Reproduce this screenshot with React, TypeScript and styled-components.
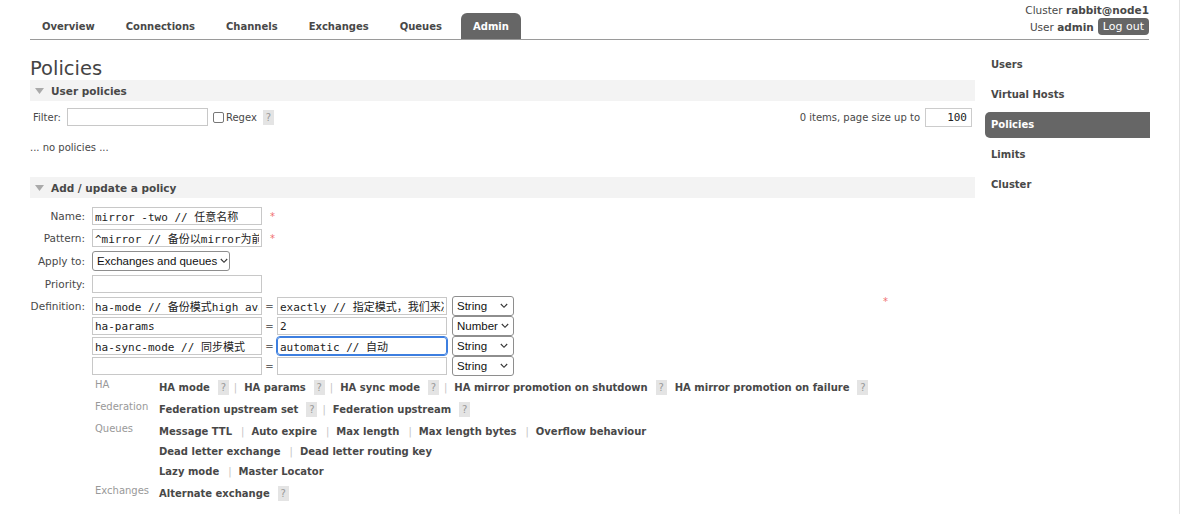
import React from 'react';
import styled, { createGlobalStyle } from 'styled-components';

const GlobalStyle = createGlobalStyle`
  html, body {
    margin: 0;
    padding: 0;
    background: #fff;
  }
  body {
    font-family: "DejaVu Sans", Verdana, sans-serif;
    font-size: 10px;
    color: #484848;
  }
`;

const MONO = '"DejaVu Sans Mono", "Noto Sans CJK SC", monospace';

const Page = styled.div`
  width: 1180px;
  height: 514px;
  box-sizing: border-box;
  border-right: 1px solid #e2e2e2;
  overflow: hidden;
`;

const Header = styled.div`
  margin: 0 30px 0 30px;
  height: 40px;
  box-sizing: border-box;
  border-bottom: 1px solid #9a9a9a;
  display: flex;
  justify-content: space-between;
  align-items: flex-end;
`;

const Nav = styled.div`
  display: flex;
  gap: 7px;
`;

const Tab = styled.div<{ active?: boolean }>`
  height: 26px;
  line-height: 27px;
  padding: 0 12px;
  font-weight: bold;
  font-size: 10px;
  color: ${(p) => (p.active ? '#fff' : '#484848')};
  background: ${(p) => (p.active ? '#666' : 'transparent')};
  border-radius: 6px 6px 0 0;
`;

const UserInfo = styled.div`
  display: flex;
  flex-direction: column;
  align-items: flex-end;
  padding-bottom: 4px;
  font-size: 10.5px;
  gap: 2px;
`;

const UserRow = styled.div`
  display: flex;
  align-items: center;
  gap: 4px;
`;

const LogOut = styled.span`
  background: #666;
  color: #fff;
  border-radius: 4px;
  padding: 0 5px;
  height: 17px;
  line-height: 17px;
  font-size: 11px;
`;

const Body = styled.div`
  display: flex;
  padding-left: 30px;
  gap: 10px;
`;

const Main = styled.div`
  width: 945px;
`;

const Title = styled.h1`
  margin: 18px 0 0 0;
  font-size: 19.5px;
  line-height: 22px;
  font-weight: normal;
  color: #444;
`;

const SectionHeader = styled.div<{ top?: number }>`
  margin-top: ${(p) => p.top ?? 0}px;
  height: 21px;
  background: #f3f3f3;
  display: flex;
  align-items: center;
  gap: 7px;
  padding-left: 5px;
  font-weight: bold;
  font-size: 10.5px;
`;

const FilterRow = styled.div`
  margin-top: 6px;
  display: flex;
  align-items: center;
  height: 20px;
`;

const FilterLabel = styled.span`
  margin: 0 6px 0 3px;
`;

const TextInput = styled.input<{ w: number; focused?: boolean }>`
  width: ${(p) => p.w}px;
  height: 18px;
  box-sizing: border-box;
  border: 1px solid ${(p) => (p.focused ? '#3d7fe0' : '#c8c8c8')};
  outline: ${(p) => (p.focused ? '1px solid #3d7fe0' : 'none')};
  border-radius: ${(p) => (p.focused ? '3px' : '0')};
  padding: 0 2px;
  font-family: ${MONO};
  font-size: 11px;
  color: #222;
  background: #fff;
`;

const Check = styled.span`
  width: 9px;
  height: 9px;
  border: 1px solid #777;
  border-radius: 2px;
  margin: 0 2px 0 5px;
`;

const Help = styled.span`
  display: inline-block;
  width: 11px;
  height: 15px;
  line-height: 15px;
  text-align: center;
  background: #e4e4e4;
  color: #999;
  font-weight: normal;
  font-size: 10px;
  margin: 0 -4px 0 8px;
  vertical-align: middle;
`;

const Spacer = styled.div`
  flex: 1;
`;

const PageSize = styled.input`
  width: 47px;
  height: 19px;
  box-sizing: border-box;
  margin: 0 3px 0 5px;
  border: 1px solid #ccc;
  text-align: right;
  padding: 0 4px;
  font-family: ${MONO};
  font-size: 11px;
  color: #222;
`;

const Empty = styled.div`
  margin-top: 14px;
  line-height: 14px;
  font-size: 10px;
`;

const Triangle = () => (
  <svg width="9" height="6" viewBox="0 0 9 6">
    <path d="M0 0 L9 0 L4.5 6 Z" fill="#aaa" />
  </svg>
);

const Form = styled.div`
  margin-top: 9px;
  display: grid;
  grid-template-columns: 62px auto;
  row-gap: 4px;
  align-items: center;
`;

const Label = styled.div`
  text-align: right;
  padding-right: 7px;
  font-size: 10.5px;
  align-self: start;
  line-height: 18px;
`;

const Field = styled.div`
  display: flex;
  align-items: center;
  gap: 8px;
`;

const Star = styled.span`
  color: #f07070;
  font-size: 10px;
`;

const SelectBox = styled.div<{ w: number }>`
  width: ${(p) => p.w}px;
  height: 20px;
  box-sizing: border-box;
  border: 1px solid #8e8e8e;
  border-radius: 3px;
  background: #fff;
  display: flex;
  align-items: center;
  justify-content: space-between;
  gap: 3px;
  padding: 0 5px 0 4px;
  font-family: "Liberation Sans", Arial, sans-serif;
  font-size: 11.5px;
  color: #111;
  white-space: nowrap;
  overflow: hidden;
`;

const Chevron = () => (
  <svg width="8" height="6" viewBox="0 0 8 6" style={{ flexShrink: 0 }}>
    <path d="M0.8 1 L4 4.3 L7.2 1" fill="none" stroke="#333" strokeWidth="1.1" />
  </svg>
);

const Select = ({ w, value }: { w: number; value: string }) => (
  <SelectBox w={w}>
    <span>{value}</span>
    <Chevron />
  </SelectBox>
);

const DefBlock = styled.div`
  display: flex;
  align-items: flex-start;
`;

const DefRows = styled.div`
  display: flex;
  flex-direction: column;
  gap: 2px;
`;

const DefRow = styled.div`
  display: flex;
  align-items: center;
  height: 18px;
`;

const Eq = styled.span`
  width: 15px;
  text-align: center;
  color: #666;
  font-size: 10px;
`;

const DefSelectWrap = styled.div`
  margin-left: 5px;
`;

const DefStar = styled(Star)`
  margin-left: 369px;
  margin-top: -1px;
`;

const HelpBlock = styled.div`
  margin: 2px 0 0 65px;
  display: grid;
  grid-template-columns: 64px auto;
  row-gap: 2px;
`;

const HelpLabel = styled.div`
  color: #999;
  font-size: 10px;
  line-height: 16px;
`;

const HelpLines = styled.div`
  display: flex;
  flex-direction: column;
`;

const HelpLine = styled.div`
  height: 20px;
  display: flex;
  align-items: center;
  font-weight: bold;
  font-size: 10px;
  white-space: nowrap;
`;

const Sep = styled.span`
  color: #c4c4c4;
  font-weight: normal;
  margin: 0 7px 0 9px;
`;

const Side = styled.div`
  width: 165px;
  padding-top: 12px;
  display: flex;
  flex-direction: column;
  gap: 4px;
`;

const SideItem = styled.div<{ active?: boolean }>`
  height: 26px;
  line-height: 26px;
  padding-left: 6px;
  font-weight: bold;
  font-size: 10px;
  color: ${(p) => (p.active ? '#fff' : '#484848')};
  background: ${(p) => (p.active ? '#666' : 'transparent')};
  border-radius: 5px 0 0 5px;
`;

type HItem = { text: string; help?: boolean; sep?: boolean };

const helpGroups: { label: string; lines: HItem[][] }[] = [
  {
    label: 'HA',
    lines: [
      [
        { text: 'HA mode', help: true, sep: true },
        { text: 'HA params', help: true, sep: true },
        { text: 'HA sync mode', help: true, sep: true },
        { text: 'HA mirror promotion on shutdown', help: true },
        { text: 'HA mirror promotion on failure', help: true },
      ],
    ],
  },
  {
    label: 'Federation',
    lines: [
      [
        { text: 'Federation upstream set', help: true, sep: true },
        { text: 'Federation upstream', help: true },
      ],
    ],
  },
  {
    label: 'Queues',
    lines: [
      [
        { text: 'Message TTL', sep: true },
        { text: 'Auto expire', sep: true },
        { text: 'Max length', sep: true },
        { text: 'Max length bytes', sep: true },
        { text: 'Overflow behaviour' },
      ],
      [{ text: 'Dead letter exchange', sep: true }, { text: 'Dead letter routing key' }],
      [{ text: 'Lazy mode', sep: true }, { text: 'Master Locator' }],
    ],
  },
  {
    label: 'Exchanges',
    lines: [[{ text: 'Alternate exchange', help: true }]],
  },
];

const Gap = styled.span`
  display: inline-block;
  width: 12px;
`;

const defs = [
  { k: 'ha-mode // 备份模式high availability', v: 'exactly // 指定模式，我们来决定', t: 'String' },
  { k: 'ha-params', v: '2', t: 'Number' },
  { k: 'ha-sync-mode // 同步模式', v: 'automatic // 自动', t: 'String', focused: true },
  { k: '', v: '', t: 'String' },
];

export default function App() {
  return (
    <Page>
      <GlobalStyle />
      <Header>
        <Nav>
          <Tab>Overview</Tab>
          <Tab>Connections</Tab>
          <Tab>Channels</Tab>
          <Tab>Exchanges</Tab>
          <Tab>Queues</Tab>
          <Tab active>Admin</Tab>
        </Nav>
        <UserInfo>
          <span>
            Cluster <b>rabbit@node1</b>
          </span>
          <UserRow>
            <span>
              User <b>admin</b>
            </span>
            <LogOut>Log out</LogOut>
          </UserRow>
        </UserInfo>
      </Header>
      <Body>
        <Main>
          <Title>Policies</Title>
          <SectionHeader>
            <Triangle />
            User policies
          </SectionHeader>
          <FilterRow>
            <FilterLabel>Filter:</FilterLabel>
            <TextInput w={141} readOnly value="" />
            <Check />
            <span>Regex</span>
            <Help style={{ marginRight: 0, marginLeft: 6 }}>?</Help>
            <Spacer />
            <span>0 items, page size up to</span>
            <PageSize readOnly value="100" />
          </FilterRow>
          <Empty>... no policies ...</Empty>
          <SectionHeader top={22}>
            <Triangle />
            Add / update a policy
          </SectionHeader>
          <Form>
            <Label>Name:</Label>
            <Field>
              <TextInput w={170} readOnly value="mirror -two // 任意名称" />
              <Star>*</Star>
            </Field>
            <Label>Pattern:</Label>
            <Field>
              <TextInput w={170} readOnly value="^mirror // 备份以mirror为前缀" />
              <Star>*</Star>
            </Field>
            <Label style={{ lineHeight: '20px' }}>Apply to:</Label>
            <Field>
              <Select w={138} value="Exchanges and queues" />
            </Field>
            <Label>Priority:</Label>
            <Field>
              <TextInput w={170} readOnly value="" />
            </Field>
            <Label>Definition:</Label>
            <DefBlock>
              <DefRows>
                {defs.map((d, i) => (
                  <DefRow key={i}>
                    <TextInput w={170} readOnly value={d.k} />
                    <Eq>=</Eq>
                    <TextInput w={170} readOnly value={d.v} focused={d.focused} />
                    <DefSelectWrap>
                      <Select w={62} value={d.t} />
                    </DefSelectWrap>
                  </DefRow>
                ))}
              </DefRows>
              <DefStar>*</DefStar>
            </DefBlock>
          </Form>
          <HelpBlock>
            {helpGroups.map((g) => (
              <React.Fragment key={g.label}>
                <HelpLabel>{g.label}</HelpLabel>
                <HelpLines>
                  {g.lines.map((line, li) => (
                    <HelpLine key={li}>
                      {line.map((it, ii) => (
                        <React.Fragment key={ii}>
                          <span>{it.text}</span>
                          {it.help && <Help>?</Help>}
                          {it.sep && <Sep>|</Sep>}
                          {!it.sep && ii < line.length - 1 && <Gap />}
                        </React.Fragment>
                      ))}
                    </HelpLine>
                  ))}
                </HelpLines>
              </React.Fragment>
            ))}
          </HelpBlock>
        </Main>
        <Side>
          <SideItem>Users</SideItem>
          <SideItem>Virtual Hosts</SideItem>
          <SideItem active>Policies</SideItem>
          <SideItem>Limits</SideItem>
          <SideItem>Cluster</SideItem>
        </Side>
      </Body>
    </Page>
  );
}
